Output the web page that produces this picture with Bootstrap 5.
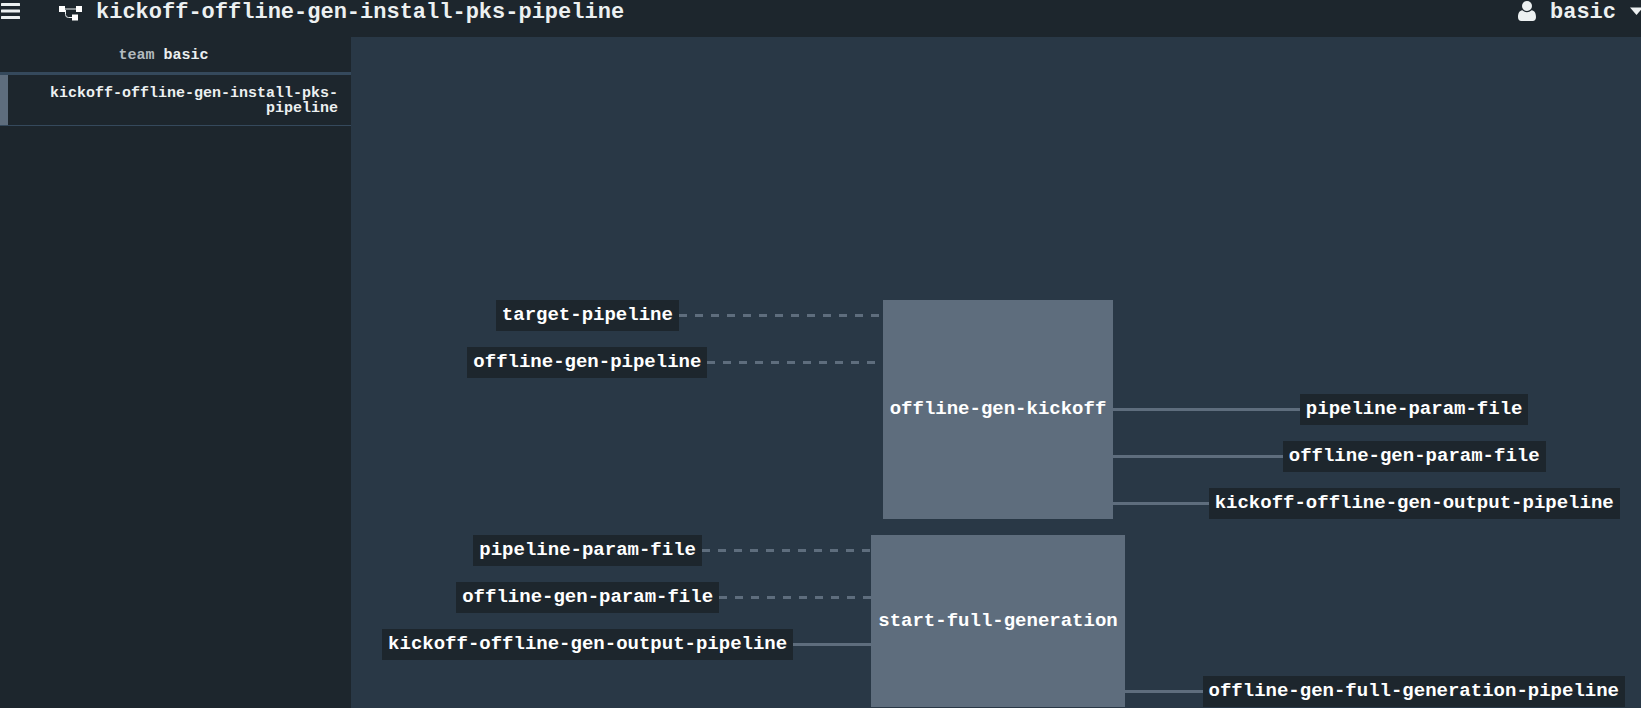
<!DOCTYPE html>
<html lang="en">
<head>
<meta charset="utf-8">
<meta name="viewport" content="width=device-width, initial-scale=1">
<title>kickoff-offline-gen-install-pks-pipeline</title>
<link href="https://cdn.jsdelivr.net/npm/bootstrap@5.3.0/dist/css/bootstrap.min.css" rel="stylesheet">
<style>
  :root {
    --frame: #1d262d;
    --canvas: #293846;
    --steel: #5e6d7d;
    --rule: #35495c;
    --ink: #ecf0f1;
  }
  body {
    background: var(--canvas);
    color: var(--ink);
    font-family: "Courier New", "Liberation Mono", monospace;
    font-weight: 700;
  }
  a, .topbar .btn { color: inherit; }

  .topbar {
    height: 37px;
    background: var(--frame);
    font-size: 22px;
    line-height: 26px;
  }
  .topbar .btn { font-size: 22px; font-weight: 700; line-height: 26px; height: 26px; }
  .topbar h1 { font-size: 22px; line-height: 26px; font-weight: 700; }
  .crumb { margin-left: 38px; gap: 14px; }
  .user-menu { gap: 14px; }

  .sidebar { width: 351px; background: var(--frame); font-size: 15px; line-height: 15px; }
  .team { height: 38px; padding: 11px 24px 9px 0; border-bottom: 3px solid var(--rule); font-size: 15px; line-height: 15px; }
  .team-label { color: #b3babf; }
  .pipeline-link {
    padding: 11px 13px 9px 24px;
    box-shadow: inset 8px 0 var(--steel);
    border-bottom: 1px solid var(--rule);
  }

  .graph { padding: 0 16px 1px 31px; gap: 16px; font-size: 19px; line-height: 31px; color: #fff; }
  .stage-wide { --link: 90px; }
  .stage-near { --link: 78px; }
  .inputs { flex: 411 1 var(--link); gap: 16px; min-width: 0; }
  .outputs { flex: 422 1 var(--link); gap: 16px; min-width: 0; }
  .job { background: var(--steel); padding: 0 7px; }
  .job:hover { color: #fff; }
  .resource { background: var(--frame); padding: 0 6px; white-space: nowrap; }
  .side { flex: 1 1 0; }
  .edge { flex: 1 1 var(--link); height: 3px; background: var(--steel); }
  .edge-dashed { background: repeating-linear-gradient(90deg, var(--steel) 0 8px, transparent 8px 16px); }
</style>
</head>
<body class="d-flex flex-column min-vh-100 overflow-hidden">

<header class="topbar d-flex justify-content-between align-items-start overflow-hidden">
  <div class="d-flex align-items-start">
    <button type="button" class="btn p-0 border-0 rounded-0 d-flex" aria-label="Toggle sidebar">
      <svg width="21" height="22" fill="#ecf0f1" aria-hidden="true"><rect x="1" y="3" width="19" height="3" rx=".5"/><rect x="1" y="9.5" width="19" height="3" rx=".5"/><rect x="1" y="16" width="19" height="3" rx=".5"/></svg>
    </button>
    <a href="#" class="crumb d-flex align-items-start text-decoration-none">
      <svg width="23" height="24" aria-hidden="true"><path d="M3 9h17M6.500 10v4.500q0 3 3 3H15" fill="none" stroke="#ecf0f1" stroke-width="1"/><path d="M0 6h6v6H0zM17 6h6v6h-6zM13 14.500h6v6h-6z" fill="#fff"/></svg>
      <h1 class="m-0">kickoff-offline-gen-install-pks-pipeline</h1>
    </a>
  </div>
  <button type="button" class="user-menu btn p-0 border-0 rounded-0 d-flex align-items-start">
    <svg width="18" height="22" fill="#ecf0f1" aria-hidden="true"><circle cx="9" cy="6" r="5"/><path d="M4.300 10.300Q9 14.200 13.700 10.300C16.500 10.600 18 13.300 18 17.200C18 19.500 16.700 21 14.700 21H3.300C1.300 21 0 19.500 0 17.200C0 13.300 1.500 10.600 4.300 10.300z"/></svg>
    <span>basic</span>
    <svg width="11" height="22" fill="#ecf0f1" aria-hidden="true"><path d="M0 7.500h13L6.500 15z"/></svg>
  </button>
</header>

<div class="d-flex flex-grow-1">
  <nav class="sidebar flex-shrink-0" aria-label="Pipelines">
    <h2 class="team text-center m-0 fw-bold"><span class="team-label">team</span> basic</h2>
    <a href="#" class="pipeline-link d-block text-end text-decoration-none">kickoff-offline-gen-install-pks-pipeline</a>
  </nav>

  <main class="graph d-flex flex-column justify-content-end flex-grow-1">
    <section class="stage-wide d-flex">
      <div class="inputs d-flex flex-column">
        <div class="d-flex align-items-center"><span class="side"></span><a href="#" class="resource text-decoration-none">target-pipeline</a><span class="edge edge-dashed"></span></div>
        <div class="d-flex align-items-center"><span class="side"></span><a href="#" class="resource text-decoration-none">offline-gen-pipeline</a><span class="edge edge-dashed"></span></div>
      </div>
      <a href="#" class="job d-flex align-items-center text-decoration-none">offline-gen-kickoff</a>
      <div class="outputs d-flex flex-column">
        <div>&nbsp;</div>
        <div>&nbsp;</div>
        <div class="d-flex align-items-center"><span class="edge"></span><a href="#" class="resource text-decoration-none">pipeline-param-file</a><span class="side"></span></div>
        <div class="d-flex align-items-center"><span class="edge"></span><a href="#" class="resource text-decoration-none">offline-gen-param-file</a><span class="side"></span></div>
        <div class="d-flex align-items-center"><span class="edge"></span><a href="#" class="resource text-decoration-none">kickoff-offline-gen-output-pipeline</a><span class="side"></span></div>
      </div>
    </section>

    <section class="stage-near d-flex">
      <div class="inputs d-flex flex-column">
        <div class="d-flex align-items-center"><span class="side"></span><a href="#" class="resource text-decoration-none">pipeline-param-file</a><span class="edge edge-dashed"></span></div>
        <div class="d-flex align-items-center"><span class="side"></span><a href="#" class="resource text-decoration-none">offline-gen-param-file</a><span class="edge edge-dashed"></span></div>
        <div class="d-flex align-items-center"><span class="side"></span><a href="#" class="resource text-decoration-none">kickoff-offline-gen-output-pipeline</a><span class="edge"></span></div>
      </div>
      <a href="#" class="job d-flex align-items-center text-decoration-none">start-full-generation</a>
      <div class="outputs d-flex flex-column">
        <div>&nbsp;</div>
        <div>&nbsp;</div>
        <div>&nbsp;</div>
        <div class="d-flex align-items-center"><span class="edge"></span><a href="#" class="resource text-decoration-none">offline-gen-full-generation-pipeline</a><span class="side"></span></div>
      </div>
    </section>
  </main>
</div>

<script src="https://cdn.jsdelivr.net/npm/bootstrap@5.3.0/dist/js/bootstrap.bundle.min.js"></script>
</body>
</html>
